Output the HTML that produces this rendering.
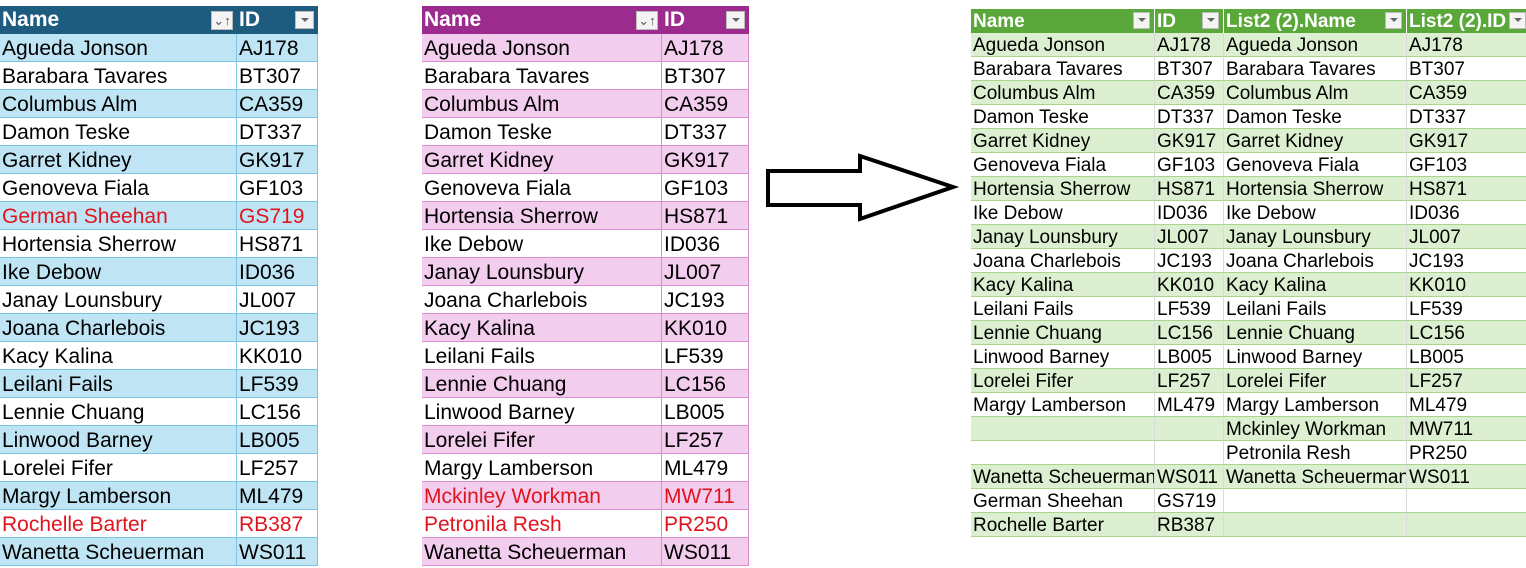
<!DOCTYPE html>
<html><head><meta charset="utf-8"><style>
*{margin:0;padding:0;box-sizing:border-box}
body{width:1526px;height:568px;background:#fff;position:relative;overflow:hidden;font-family:"Liberation Sans",Arial,sans-serif}
.tb{position:absolute}
.row{display:flex}
.c{white-space:nowrap;overflow:hidden;padding-left:2px;position:relative}
.t1 .row,.t2 .row{height:28px}
.t1 .c,.t2 .c{font-size:21px;line-height:29px}
.t1 .h .c,.t2 .h .c{color:#fff;font-weight:bold;line-height:28px}
.t1{left:0;top:6px}
.t1 .h{background:#1d5c7e}
.t1 .row:not(.h) .c{border-bottom:1px solid #7ec3e2;border-right:1px solid #7ec3e2}
.t1 .row:nth-child(even) .c{background:#bfe4f4}
.t2{left:422px;top:6px}
.t2 .h{background:#9c2b8e}
.t2 .row:not(.h) .c{border-bottom:1px solid #d88fcf;border-right:1px solid #d88fcf}
.t2 .row:nth-child(even) .c{background:#f3cdee}
.t3{left:971px;top:9px}
.t3 .row{height:24px}
.t3 .h{background:#5aa83a}
.t3 .h .c{color:#fff;font-weight:bold;font-size:19px;line-height:25px;border-right:1px solid #fff}
.t3 .row:not(.h) .c{font-size:19px;line-height:25px;border-bottom:1px solid #a9d58f;border-right:1px solid #dadada}
.t3 .row:nth-child(even) .c{background:#dcf0d1}
.r{color:#e0141e}
.dd{position:absolute;top:5px;right:4px;width:19px;height:18px;background:#f4f4f4;border:1px solid #bbb}
.dd:after{content:"";position:absolute;left:5px;top:6px;border:4px solid transparent;border-top:4px solid #666}
.t3 .dd{top:3px;width:17px;height:17px}
.t3 .dd:after{top:5px;left:4px}
.srt{position:absolute;top:5px;right:4px;width:22px;height:19px;background:#f4f4f4;border:1px solid #bbb;color:#555;font-size:13px;line-height:17px;text-align:center;font-weight:normal}
.a{width:237px}.b{width:81px}
.a2{width:240px}.b2{width:87px}
.w1{width:184px}.w2{width:69px}.w3{width:183px}.w4{width:124px}
</style></head><body>
<div class="tb t1">
<div class="row h"><div class="c a">Name<span class="srt">⌄↑</span></div><div class="c b">ID<span class="dd"></span></div></div>
<div class="row"><div class="c a">Agueda Jonson</div><div class="c b">AJ178</div></div>
<div class="row"><div class="c a">Barabara Tavares</div><div class="c b">BT307</div></div>
<div class="row"><div class="c a">Columbus Alm</div><div class="c b">CA359</div></div>
<div class="row"><div class="c a">Damon Teske</div><div class="c b">DT337</div></div>
<div class="row"><div class="c a">Garret Kidney</div><div class="c b">GK917</div></div>
<div class="row"><div class="c a">Genoveva Fiala</div><div class="c b">GF103</div></div>
<div class="row"><div class="c a r">German Sheehan</div><div class="c b r">GS719</div></div>
<div class="row"><div class="c a">Hortensia Sherrow</div><div class="c b">HS871</div></div>
<div class="row"><div class="c a">Ike Debow</div><div class="c b">ID036</div></div>
<div class="row"><div class="c a">Janay Lounsbury</div><div class="c b">JL007</div></div>
<div class="row"><div class="c a">Joana Charlebois</div><div class="c b">JC193</div></div>
<div class="row"><div class="c a">Kacy Kalina</div><div class="c b">KK010</div></div>
<div class="row"><div class="c a">Leilani Fails</div><div class="c b">LF539</div></div>
<div class="row"><div class="c a">Lennie Chuang</div><div class="c b">LC156</div></div>
<div class="row"><div class="c a">Linwood Barney</div><div class="c b">LB005</div></div>
<div class="row"><div class="c a">Lorelei Fifer</div><div class="c b">LF257</div></div>
<div class="row"><div class="c a">Margy Lamberson</div><div class="c b">ML479</div></div>
<div class="row"><div class="c a r">Rochelle Barter</div><div class="c b r">RB387</div></div>
<div class="row"><div class="c a">Wanetta Scheuerman</div><div class="c b">WS011</div></div>
</div>
<div class="tb t2">
<div class="row h"><div class="c a2">Name<span class="srt">⌄↑</span></div><div class="c b2">ID<span class="dd"></span></div></div>
<div class="row"><div class="c a2">Agueda Jonson</div><div class="c b2">AJ178</div></div>
<div class="row"><div class="c a2">Barabara Tavares</div><div class="c b2">BT307</div></div>
<div class="row"><div class="c a2">Columbus Alm</div><div class="c b2">CA359</div></div>
<div class="row"><div class="c a2">Damon Teske</div><div class="c b2">DT337</div></div>
<div class="row"><div class="c a2">Garret Kidney</div><div class="c b2">GK917</div></div>
<div class="row"><div class="c a2">Genoveva Fiala</div><div class="c b2">GF103</div></div>
<div class="row"><div class="c a2">Hortensia Sherrow</div><div class="c b2">HS871</div></div>
<div class="row"><div class="c a2">Ike Debow</div><div class="c b2">ID036</div></div>
<div class="row"><div class="c a2">Janay Lounsbury</div><div class="c b2">JL007</div></div>
<div class="row"><div class="c a2">Joana Charlebois</div><div class="c b2">JC193</div></div>
<div class="row"><div class="c a2">Kacy Kalina</div><div class="c b2">KK010</div></div>
<div class="row"><div class="c a2">Leilani Fails</div><div class="c b2">LF539</div></div>
<div class="row"><div class="c a2">Lennie Chuang</div><div class="c b2">LC156</div></div>
<div class="row"><div class="c a2">Linwood Barney</div><div class="c b2">LB005</div></div>
<div class="row"><div class="c a2">Lorelei Fifer</div><div class="c b2">LF257</div></div>
<div class="row"><div class="c a2">Margy Lamberson</div><div class="c b2">ML479</div></div>
<div class="row"><div class="c a2 r">Mckinley Workman</div><div class="c b2 r">MW711</div></div>
<div class="row"><div class="c a2 r">Petronila Resh</div><div class="c b2 r">PR250</div></div>
<div class="row"><div class="c a2">Wanetta Scheuerman</div><div class="c b2">WS011</div></div>
</div>
<svg style="position:absolute;left:0;top:0" width="1526" height="568"><path d="M768 171 L860 171 L860 156 L953 187 L860 219 L860 205 L768 205 Z" fill="#fff" stroke="#000" stroke-width="4"/></svg>
<div class="tb t3">
<div class="row h"><div class="c w1">Name<span class="dd"></span></div><div class="c w2">ID<span class="dd"></span></div><div class="c w3">List2 (2).Name<span class="dd"></span></div><div class="c w4">List2 (2).ID<span class="dd"></span></div></div>
<div class="row"><div class="c w1">Agueda Jonson</div><div class="c w2">AJ178</div><div class="c w3">Agueda Jonson</div><div class="c w4">AJ178</div></div>
<div class="row"><div class="c w1">Barabara Tavares</div><div class="c w2">BT307</div><div class="c w3">Barabara Tavares</div><div class="c w4">BT307</div></div>
<div class="row"><div class="c w1">Columbus Alm</div><div class="c w2">CA359</div><div class="c w3">Columbus Alm</div><div class="c w4">CA359</div></div>
<div class="row"><div class="c w1">Damon Teske</div><div class="c w2">DT337</div><div class="c w3">Damon Teske</div><div class="c w4">DT337</div></div>
<div class="row"><div class="c w1">Garret Kidney</div><div class="c w2">GK917</div><div class="c w3">Garret Kidney</div><div class="c w4">GK917</div></div>
<div class="row"><div class="c w1">Genoveva Fiala</div><div class="c w2">GF103</div><div class="c w3">Genoveva Fiala</div><div class="c w4">GF103</div></div>
<div class="row"><div class="c w1">Hortensia Sherrow</div><div class="c w2">HS871</div><div class="c w3">Hortensia Sherrow</div><div class="c w4">HS871</div></div>
<div class="row"><div class="c w1">Ike Debow</div><div class="c w2">ID036</div><div class="c w3">Ike Debow</div><div class="c w4">ID036</div></div>
<div class="row"><div class="c w1">Janay Lounsbury</div><div class="c w2">JL007</div><div class="c w3">Janay Lounsbury</div><div class="c w4">JL007</div></div>
<div class="row"><div class="c w1">Joana Charlebois</div><div class="c w2">JC193</div><div class="c w3">Joana Charlebois</div><div class="c w4">JC193</div></div>
<div class="row"><div class="c w1">Kacy Kalina</div><div class="c w2">KK010</div><div class="c w3">Kacy Kalina</div><div class="c w4">KK010</div></div>
<div class="row"><div class="c w1">Leilani Fails</div><div class="c w2">LF539</div><div class="c w3">Leilani Fails</div><div class="c w4">LF539</div></div>
<div class="row"><div class="c w1">Lennie Chuang</div><div class="c w2">LC156</div><div class="c w3">Lennie Chuang</div><div class="c w4">LC156</div></div>
<div class="row"><div class="c w1">Linwood Barney</div><div class="c w2">LB005</div><div class="c w3">Linwood Barney</div><div class="c w4">LB005</div></div>
<div class="row"><div class="c w1">Lorelei Fifer</div><div class="c w2">LF257</div><div class="c w3">Lorelei Fifer</div><div class="c w4">LF257</div></div>
<div class="row"><div class="c w1">Margy Lamberson</div><div class="c w2">ML479</div><div class="c w3">Margy Lamberson</div><div class="c w4">ML479</div></div>
<div class="row"><div class="c w1"></div><div class="c w2"></div><div class="c w3">Mckinley Workman</div><div class="c w4">MW711</div></div>
<div class="row"><div class="c w1"></div><div class="c w2"></div><div class="c w3">Petronila Resh</div><div class="c w4">PR250</div></div>
<div class="row"><div class="c w1">Wanetta Scheuerman</div><div class="c w2">WS011</div><div class="c w3">Wanetta Scheuerman</div><div class="c w4">WS011</div></div>
<div class="row"><div class="c w1">German Sheehan</div><div class="c w2">GS719</div><div class="c w3"></div><div class="c w4"></div></div>
<div class="row"><div class="c w1">Rochelle Barter</div><div class="c w2">RB387</div><div class="c w3"></div><div class="c w4"></div></div>
</div>
</body></html>
